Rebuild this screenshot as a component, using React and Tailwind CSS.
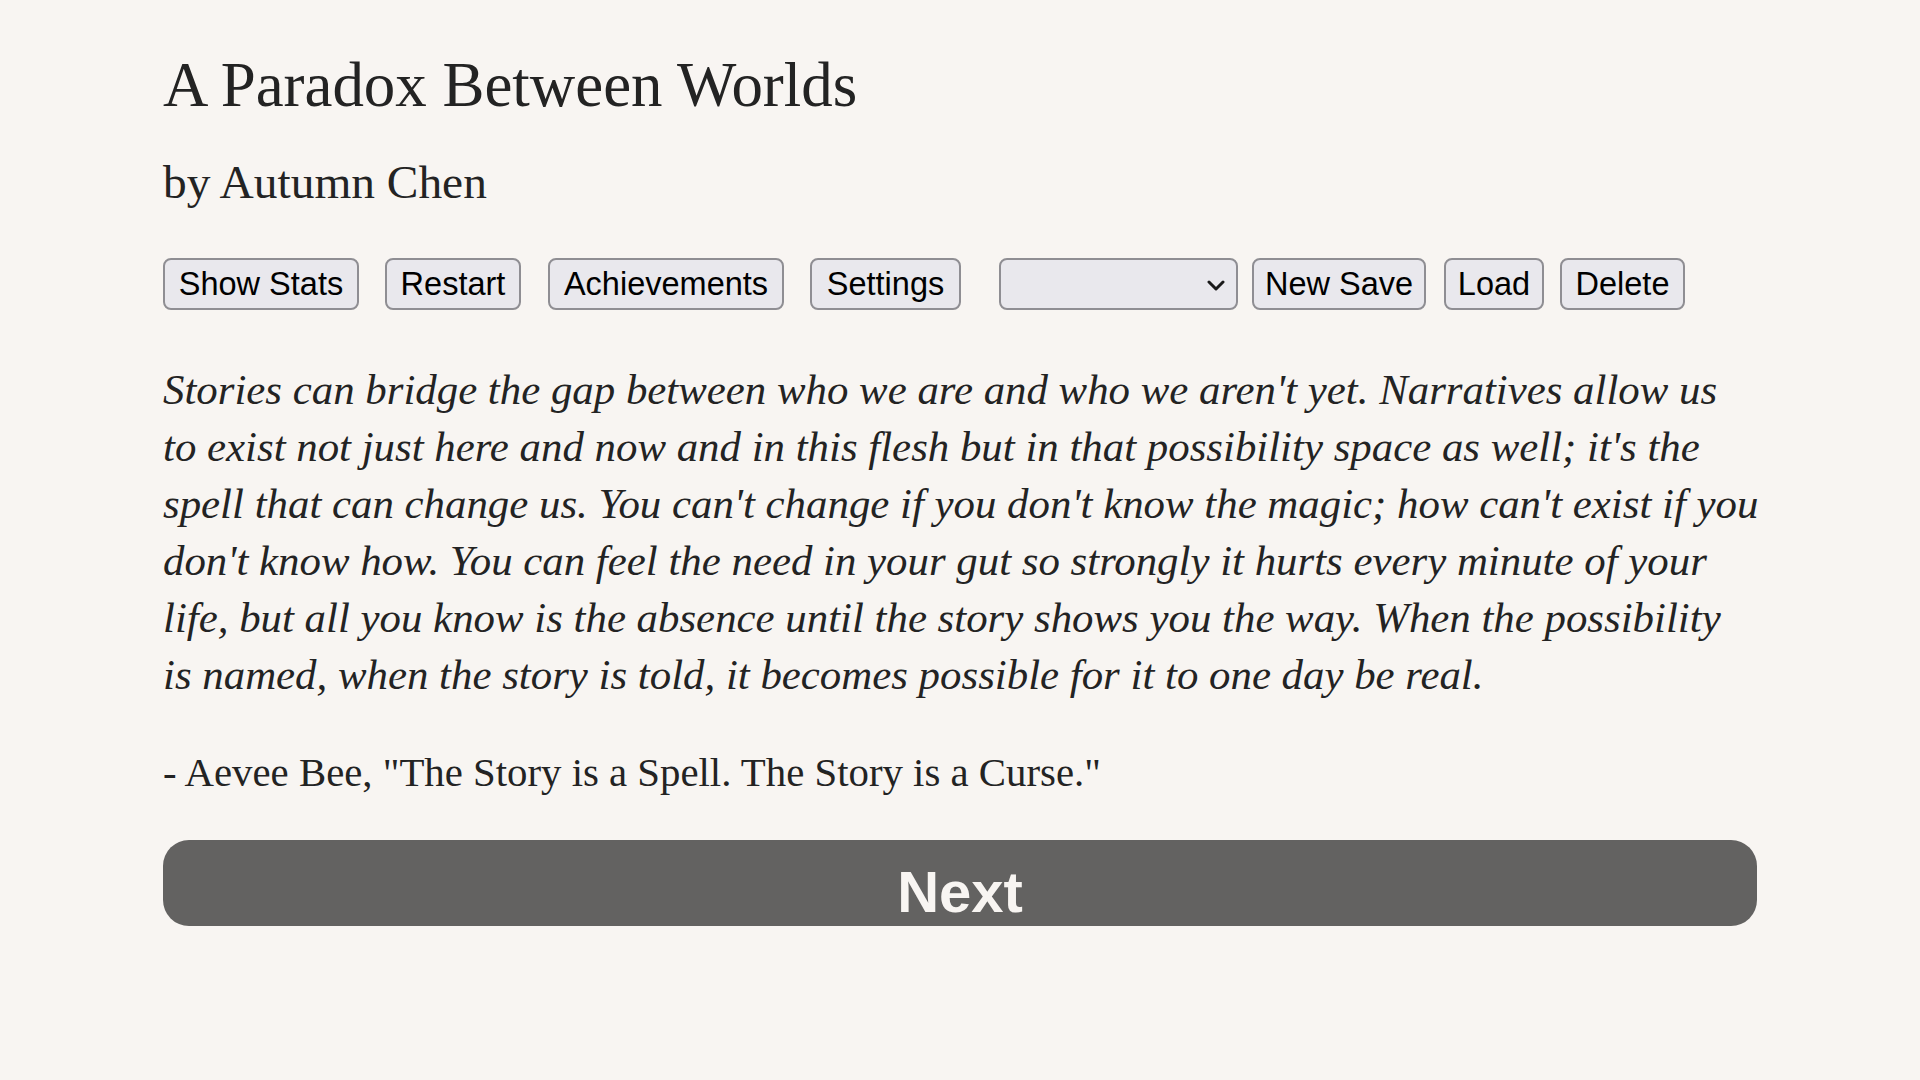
import { useState } from 'react';

const passage = [
  "Stories can bridge the gap between who we are and who we aren't yet. Narratives allow us",
  "to exist not just here and now and in this flesh but in that possibility space as well; it's the",
  "spell that can change us. You can't change if you don't know the magic; how can't exist if you",
  "don't know how. You can feel the need in your gut so strongly it hurts every minute of your",
  "life, but all you know is the absence until the story shows you the way. When the possibility",
  "is named, when the story is told, it becomes possible for it to one day be real.",
];

const ToolButton = ({ label, className }) => {
  return (
    <button
      className={`h-[52px] border-2 border-[#8f8e93] rounded-[8px] bg-[#e9e8ed] text-black text-[32.5px] leading-[48px] text-center font-['Liberation_Sans',Arial,sans-serif] ${className}`}
    >
      {label}
    </button>
  );
};

const App = () => {
  const [save, setSave] = useState('');

  return (
    <div className="min-h-screen w-full bg-[#f8f5f2] text-[#232323] font-['Liberation_Serif','Times_New_Roman',serif]">
      <div className="w-[1594px] mx-auto pt-[49px]">
        <h1 className="text-[62.9px] leading-[72px] font-normal">A Paradox Between Worlds</h1>
        <h2 className="mt-[33px] text-[47.4px] leading-[56px] font-normal">by Autumn Chen</h2>

        {/* ====== toolbar ====== */}
        <div className="mt-[48px] flex items-center">
          <ToolButton label="Show Stats" className="w-[196px]" />
          <ToolButton label="Restart" className="w-[136px] ml-[26px]" />
          <ToolButton label="Achievements" className="w-[236px] ml-[27px]" />
          <ToolButton label="Settings" className="w-[151px] ml-[26px]" />
          <div className="relative ml-[38px] w-[239px] h-[52px]">
            <select
              value={save}
              onChange={(e) => setSave(e.target.value)}
              className="appearance-none w-full h-full border-2 border-[#8f8e93] rounded-[8px] bg-[#e9e8ed] text-[32px] font-['Liberation_Sans',Arial,sans-serif] px-3 outline-none"
            >
              <option value=""></option>
            </select>
            <svg
              className="absolute right-[13px] top-[22px] pointer-events-none"
              width="18"
              height="11"
              viewBox="0 0 18 11"
              fill="none"
            >
              <path d="M2 2l7 7 7-7" stroke="#1a1a1a" strokeWidth="3" strokeLinecap="round" strokeLinejoin="round" />
            </svg>
          </div>
          <ToolButton label="New Save" className="w-[174px] ml-[14px]" />
          <ToolButton label="Load" className="w-[100px] ml-[18px]" />
          <ToolButton label="Delete" className="w-[125px] ml-[16px]" />
        </div>

        <p className="mt-[51px] text-[42.85px] leading-[57px] italic whitespace-nowrap">
          {passage.map((line, index) => (
            <span key={index}>
              {line}
              {index < passage.length - 1 && <br />}
            </span>
          ))}
        </p>

        <p className="mt-[41px] text-[40.8px] leading-[57px]">
          - Aevee Bee, "The Story is a Spell. The Story is a Curse."
        </p>

        <button className="mt-[39px] w-full h-[86px] rounded-[26px] bg-[#636261] text-[#f8f5f2] text-[58px] font-bold pt-[18px] leading-[68px] font-['Liberation_Sans',Arial,sans-serif]">
          Next
        </button>
      </div>
    </div>
  );
};

export default App;
